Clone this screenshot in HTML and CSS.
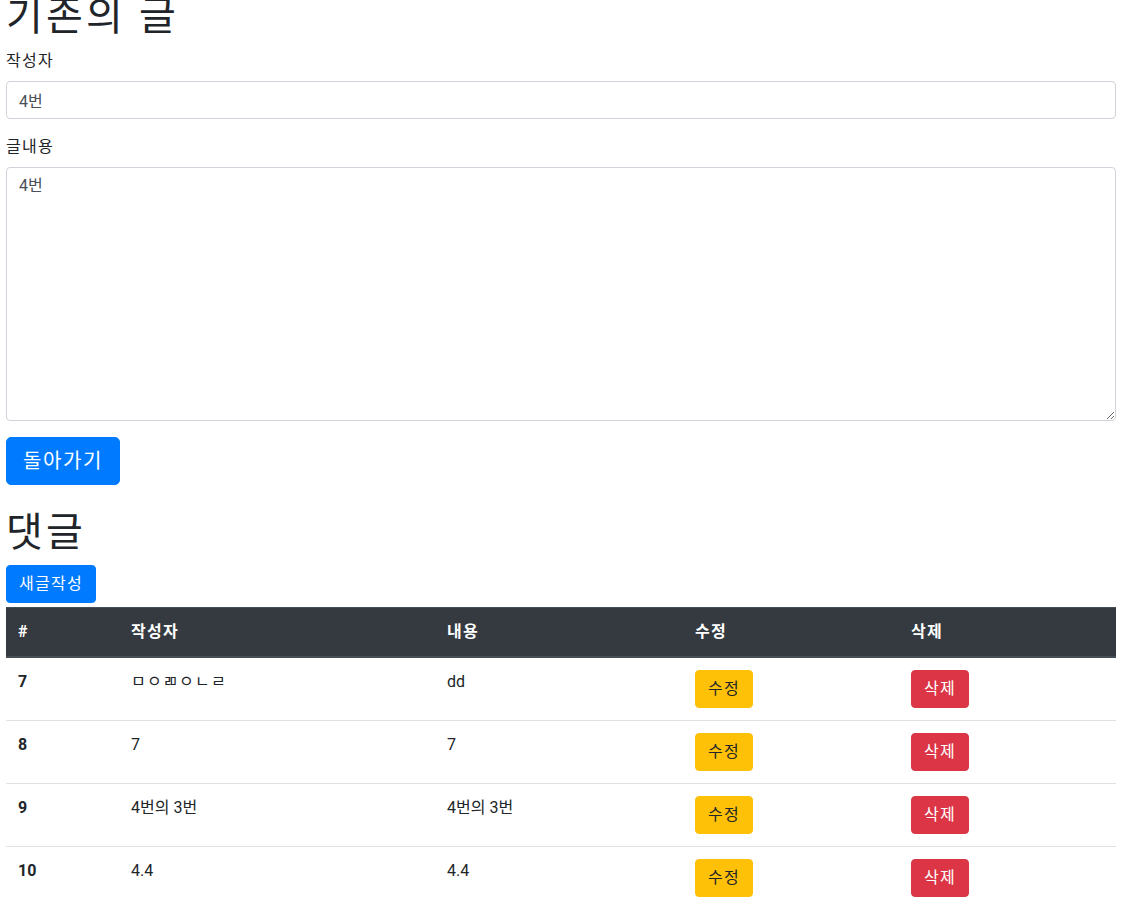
FILE: index.html
```html
<!DOCTYPE html>
<html lang="ko">
<head>
<meta charset="utf-8">
<title>기존의 글</title>
<link rel="stylesheet" href="styles.css">
</head>
<body>
<div class="container">
  <h1 class="title title-first ko">기존의 글</h1>
  <form class="post-form">
    <div class="form-group">
      <label class="form-label ko">작성자</label>
      <input class="form-control" type="text" value="4번" readonly>
    </div>
    <div class="form-group">
      <label class="form-label ko">글내용</label>
      <textarea class="form-control form-textarea" rows="10" readonly>4번</textarea>
    </div>
    <button type="button" class="btn btn-lg btn-primary ko">돌아가기</button>
  </form>

  <h1 class="title title-comments ko">댓글</h1>
  <div class="actions">
    <button type="button" class="btn btn-primary ko">새글작성</button>
  </div>
  <table class="table">
    <thead>
      <tr>
        <th class="col-num">#</th>
        <th class="col-writer ko">작성자</th>
        <th class="col-content ko">내용</th>
        <th class="col-edit ko">수정</th>
        <th class="col-del ko">삭제</th>
      </tr>
    </thead>
    <tbody>
      <tr>
        <th class="row-num">7</th>
        <td class="ko">ㅁㅇㄻㅇㄴㄹ</td>
        <td>dd</td>
        <td><button type="button" class="btn btn-warning ko">수정</button></td>
        <td><button type="button" class="btn btn-danger ko">삭제</button></td>
      </tr>
      <tr>
        <th class="row-num">8</th>
        <td>7</td>
        <td>7</td>
        <td><button type="button" class="btn btn-warning ko">수정</button></td>
        <td><button type="button" class="btn btn-danger ko">삭제</button></td>
      </tr>
      <tr>
        <th class="row-num">9</th>
        <td>4번의 3번</td>
        <td>4번의 3번</td>
        <td><button type="button" class="btn btn-warning ko">수정</button></td>
        <td><button type="button" class="btn btn-danger ko">삭제</button></td>
      </tr>
      <tr>
        <th class="row-num">10</th>
        <td>4.4</td>
        <td>4.4</td>
        <td><button type="button" class="btn btn-warning ko">수정</button></td>
        <td><button type="button" class="btn btn-danger ko">삭제</button></td>
      </tr>
    </tbody>
  </table>
</div>
</body>
</html>
```

FILE: styles.css
```css
* {
  box-sizing: border-box;
}

html, body {
  margin: 0;
  padding: 0;
  background: #fff;
}

body {
  font-family: Roboto, "Noto Sans CJK KR", sans-serif;
  font-size: 16px;
  line-height: 1.5;
  color: #212529;
  overflow: hidden;
}

.ko {
  letter-spacing: 0.08em;
}

.container {
  width: 1110px;
  margin-left: 6px;
}

.title {
  font-size: 40px;
  font-weight: 400;
  line-height: 48px;
  margin: 0 0 8px 0;
  color: #212529;
}

.title-first {
  margin-top: -7px;
}

.title-comments {
  margin-top: 24px;
}

.post-form {
  margin: 0;
}

.form-group {
  margin-bottom: 16px;
}

.form-label {
  display: block;
  margin-bottom: 8px;
  line-height: 24px;
}

.form-control {
  display: block;
  width: 100%;
  height: 38px;
  padding: 6px 12px;
  font-family: inherit;
  font-size: 16px;
  line-height: 24px;
  color: #495057;
  background: #fff;
  border: 1px solid #ced4da;
  border-radius: 4px;
  margin: 0;
  outline: none;
}

.form-textarea {
  height: 254px;
  resize: vertical;
}

.btn {
  display: inline-block;
  font-family: inherit;
  font-size: 16px;
  line-height: 24px;
  font-weight: 400;
  padding: 6px 12px;
  border: 1px solid transparent;
  border-radius: 4px;
  cursor: pointer;
  margin: 0;
  vertical-align: middle;
}

.btn-lg {
  font-size: 20px;
  line-height: 30px;
  padding: 8px 16px;
  border-radius: 5px;
}

.btn-primary {
  background: #007bff;
  border-color: #007bff;
  color: #fff;
}

.btn-warning {
  background: #ffc107;
  border-color: #ffc107;
  color: #212529;
}

.btn-danger {
  background: #dc3545;
  border-color: #dc3545;
  color: #fff;
}

.actions {
  display: flex;
  margin-bottom: 4px;
}

.table {
  width: 100%;
  border-collapse: collapse;
  color: #212529;
}

.table th,
.table td {
  padding: 12px;
  text-align: left;
  vertical-align: top;
  border-top: 1px solid #dee2e6;
  line-height: 24px;
}

.table thead th {
  background: #343a40;
  color: #fff;
  font-weight: 700;
  border-top: 1px solid #454d55;
  border-bottom: 2px solid #454d55;
}

.row-num {
  font-weight: 700;
}

.col-num { width: 113px; }
.col-writer { width: 316px; }
.col-content { width: 248px; }
.col-edit { width: 216px; }
.col-del { width: 217px; }
```
